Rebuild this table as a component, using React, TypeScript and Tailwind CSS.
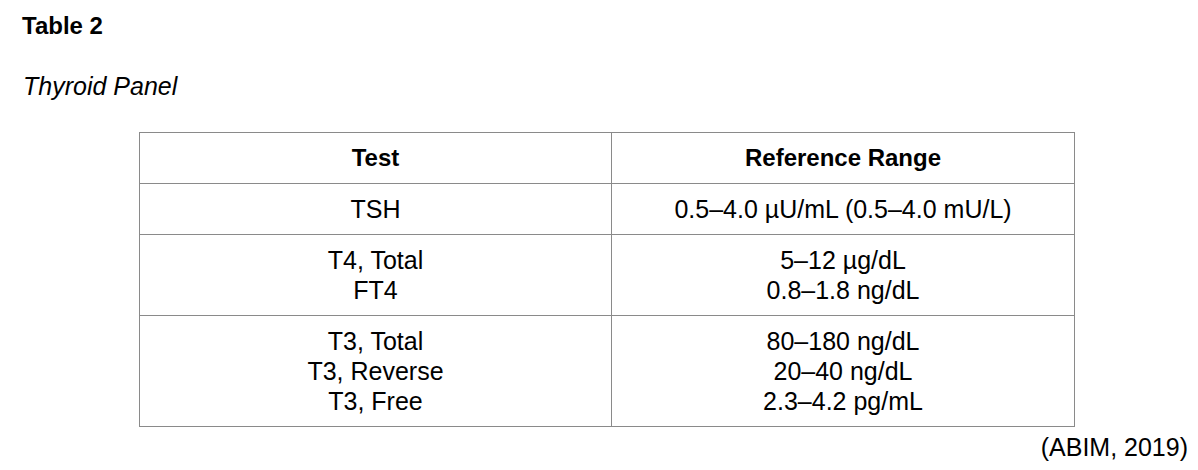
import React from "react";

const rows: { tests: string[]; ranges: string[] }[] = [
  { tests: ["TSH"], ranges: ["0.5–4.0 µU/mL (0.5–4.0 mU/L)"] },
  { tests: ["T4, Total", "FT4"], ranges: ["5–12 µg/dL", "0.8–1.8 ng/dL"] },
  {
    tests: ["T3, Total", "T3, Reverse", "T3, Free"],
    ranges: ["80–180 ng/dL", "20–40 ng/dL", "2.3–4.2 pg/mL"],
  },
];

export default function App() {
  return (
    <div
      className="w-[1198px] h-[470px] bg-white text-black overflow-hidden"
      style={{ fontFamily: '"Liberation Sans", Arial, Helvetica, sans-serif' }}
    >
      <div className="pt-[12px] pl-[22px] text-[24px] leading-[28px] font-bold">Table 2</div>
      <div className="pt-[32px] pl-[23px] text-[25px] leading-[28px] italic">Thyroid Panel</div>
      <table className="mt-[32px] ml-[139px] w-[936px] border-collapse text-[25px] leading-[30px] text-center">
        <thead>
          <tr>
            <th className="w-[472px] border border-[#8a8a8a] py-[10px] font-bold text-[24px]">Test</th>
            <th className="border border-[#8a8a8a] py-[10px] font-bold text-[24px]">Reference Range</th>
          </tr>
        </thead>
        <tbody>
          {rows.map((r, i) => (
            <tr key={i}>
              <td className="border border-[#8a8a8a] py-[10px]">
                {r.tests.map((t) => (
                  <div key={t}>{t}</div>
                ))}
              </td>
              <td className="border border-[#8a8a8a] py-[10px]">
                {r.ranges.map((t) => (
                  <div key={t}>{t}</div>
                ))}
              </td>
            </tr>
          ))}
        </tbody>
      </table>
      <div className="pr-[10px] pt-[6px] text-right text-[25px] leading-[28px]">(ABIM, 2019)</div>
    </div>
  );
}
